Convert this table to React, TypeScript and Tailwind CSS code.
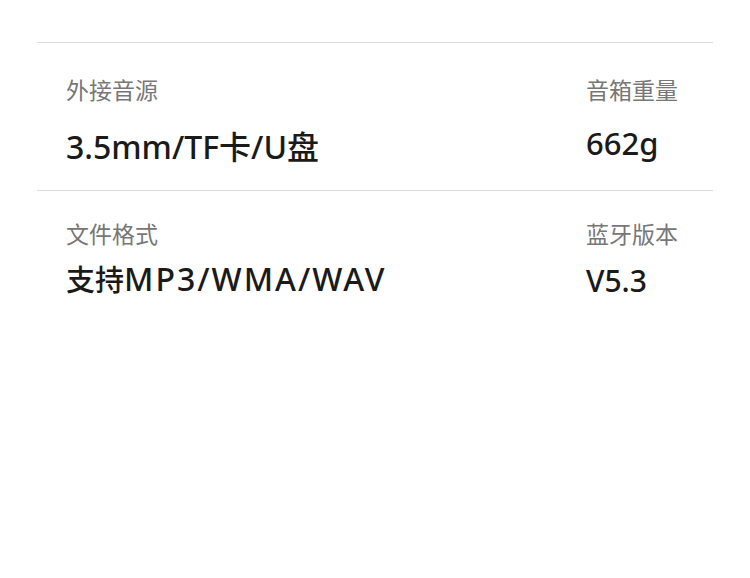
export default function App() {
  const label = { fontFamily: '"Noto Sans CJK SC", "Noto Sans", sans-serif' };
  const value = { fontFamily: '"Noto Sans", "Noto Sans CJK SC", sans-serif' };
  return (
    <div className="w-[750px] h-[578px] bg-white">
      <div className="pt-[42px] mx-[37px]">
        {/* row 1 */}
        <div className="border-t border-b border-[#dcdcdc] pl-[29px] pt-[31px] pb-[23px] flex">
          <div className="flex-1">
            <p style={label} className="text-[23px] leading-[30px] text-[#777777]">外接音源</p>
            <p style={value} className="mt-[23px] text-[32px] leading-[40px] font-medium text-[#1a1a1a]">3.5mm/TF卡/U盘</p>
          </div>
          <div className="w-[127px]">
            <p style={label} className="text-[23px] leading-[30px] text-[#777777]">音箱重量</p>
            <p style={value} className="mt-[19px] text-[31px] leading-[40px] font-medium text-[#1a1a1a]">662g</p>
          </div>
        </div>
        {/* row 2 */}
        <div className="pl-[29px] pt-[27px] flex">
          <div className="flex-1">
            <p style={label} className="text-[23px] leading-[30px] text-[#777777]">文件格式</p>
            <p style={value} className="mt-[11px] leading-[40px] font-medium text-[#1a1a1a] whitespace-nowrap">
              <span className="text-[29px]">支持</span>
              <span className="text-[32px] tracking-[2px]">MP3/WMA/WAV</span>
            </p>
          </div>
          <div className="w-[127px]">
            <p style={label} className="text-[23px] leading-[30px] text-[#777777]">蓝牙版本</p>
            <p style={value} className="mt-[13px] text-[30px] leading-[40px] font-medium text-[#1a1a1a]">V5.3</p>
          </div>
        </div>
      </div>
    </div>
  );
}
